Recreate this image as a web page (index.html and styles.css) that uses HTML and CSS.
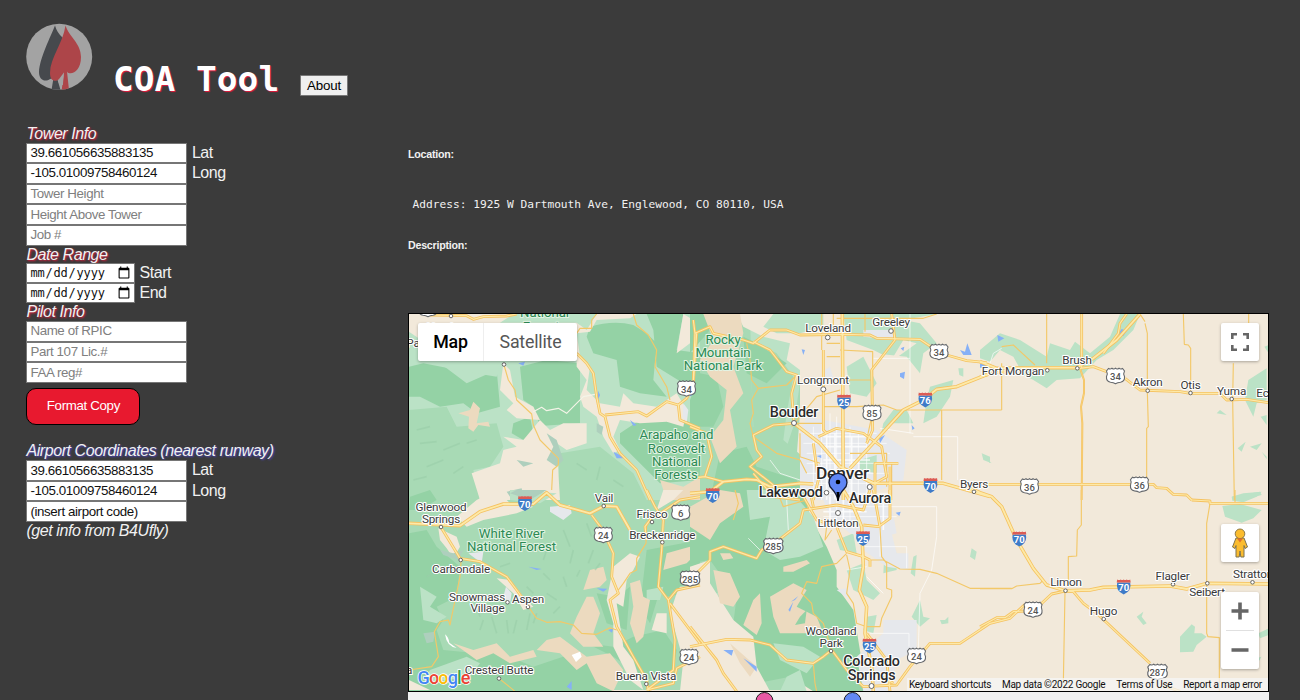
FILE: index.html
```html
<!DOCTYPE html>
<html lang="en">
<head>
<meta charset="utf-8">
<title>COA Tool</title>
<link rel="stylesheet" href="styles.css">
</head>
<body>
<header class="header">
  <svg class="logo" viewBox="20 18 80 80" width="80" height="80">
    <defs><clipPath id="disc"><circle cx="59.2" cy="56.7" r="33"/></clipPath></defs>
    <circle cx="59.2" cy="56.7" r="33" fill="#a3a3a3"/>
    <g clip-path="url(#disc)">
      <path fill="#46494d" d="M55 25.500C51 36 39.500 58 39 72c0 8 6 10.500 11 7l3.500-1L51.500 90h9L57 78l6-40Q57 33 55 25.500z"/>
      <path fill="#ad4549" d="M65.500 25.500C69 37 81 43 81 57c0 12-6.500 17-11.500 16.200Q67.500 73 67 71.500L69 90h-7.300L64 72.500C60 83 50 84 50 73 50 58 63 43 65.500 25.500z"/>
      <path fill="#a3a3a3" d="M63.900 72.500l-1 12.500h-3.200L58 80.500z"/>
    </g>
  </svg>
  <h1 class="title">COA Tool</h1>
  <button class="about">About</button>
</header>
<main class="main">
  <form class="form">
    <div class="heading">Tower Info</div>
    <label class="row"><input class="field" value="39.661056635883135">Lat</label>
    <label class="row"><input class="field" value="-105.01009758460124">Long</label>
    <div class="row"><input class="field" placeholder="Tower Height"></div>
    <div class="row"><input class="field" placeholder="Height Above Tower"></div>
    <div class="row"><input class="field" placeholder="Job #"></div>
    <div class="heading">Date Range</div>
    <label class="row row-date"><input class="field date" type="date">Start</label>
    <label class="row row-date"><input class="field date" type="date">End</label>
    <div class="heading">Pilot Info</div>
    <div class="row"><input class="field" placeholder="Name of RPIC"></div>
    <div class="row"><input class="field" placeholder="Part 107 Lic.#"></div>
    <div class="row"><input class="field" placeholder="FAA reg#"></div>
    <button class="format" type="button">Format Copy</button>
    <div class="heading airport">Airport Coordinates (nearest runway)</div>
    <label class="row"><input class="field" value="39.661056635883135">Lat</label>
    <label class="row"><input class="field" value="-105.01009758460124">Long</label>
    <div class="row"><input class="field" value="(insert airport code)"></div>
    <div class="note">(get info from B4Ufly)</div>
  </form>
  <section class="results">
    <h5 class="label">Location:</h5>
    <pre class="address">Address: 1925 W Dartmouth Ave, Englewood, CO 80110, USA</pre>
    <h5 class="label">Description:</h5>
    <div class="map">
      <svg class="canvas" viewBox="409 314 859 377" width="859" height="377">
        <defs>
          <g id="us"><path d="M-7-7.500q2 1 3.500-.3Q-1.500-6.300 0-7.800 1.500-6.300 3.500-7.800 5-6.500 7-7.500L9-5Q7.500-2.500 9 .5 9.500 5.500 5 6.200 2 6.500 0 7.700-2 6.500-5 6.200-9.500 5.500-9 .5-7.500-2.500-9-5z" fill="#fff" stroke="#66696d" stroke-width="1.100"/></g>
          <g id="is"><path d="M-6.500-4H6.500Q8.500 4 0 8-8.500 4-6.500-4z" fill="#3f7bc8"/><path d="M-6.500-7Q-4.500-5.800-3-7-1.500-5.800 0-7 1.500-5.800 3-7 4.500-5.800 6.500-7L7-4H-7z" fill="#dc5b54"/></g>
          <g id="pin"><path d="M0 16Q-1 9-6 4A9 9 0 1 1 6 4Q1 9 0 16z" fill="#5f86f5" stroke="#151b35" stroke-width="1.300"/><path d="M-1.500 7H1.500L.5 16h-1z"/><circle cy="-3" r="2.300"/></g>
          <g id="roads">
            <g transform="translate(400 300) scale(.33333)"><path d="M90 45L200 47 220 58 250 50 320 48 350 42M530 160L560 190 580 220 590 290 600 340 615 350 630 410 660 460 710 510 750 600M615 345L715 335 740 348 800 305 835 315 860 295 880 250 890 100M835 315L840 360 900 385"/></g>
            <g transform="translate(400 490) scale(.33333)"><path class="wide" d="M27 100L180 107 240 65 310 42 400 42 440 8 480 45 570 70 612 48 650 50 690 120"/><path d="M575 75L605 115 640 190 635 260 655 310 630 330 650 410 700 500 740 570 745 604M122 110L180 205 240 215 320 260 350 300 383 345M740 0L765 50 790 90 785 180 775 290 805 330 825 450 820 540 740 600M810 340L870 420 900 460M805 330L830 300 900 285M765 80L840 30 900 20M765 70L735 110 740 150M740 600L820 580 830 535 900 500"/></g>
            <g transform="translate(690 300) scale(.33333)"><path class="wide" d="M457 42L460 600M900 220L800 260 740 268 700 300 640 330 540 440 480 505M312 370L390 430 450 500M0 580L60 575 100 545 170 538 200 540 240 560 330 550 370 552M450 500L550 550H760L900 590"/><path d="M10 60L15 100 10 240M15 100L60 80 70 100 160 120 190 130 240 90 290 90 330 105 460 103 540 105 560 115 690 118 730 145M770 165L830 182 890 188M190 125L240 150 290 215 320 225 305 280 312 370 250 375 190 405 200 450 215 470 180 500 250 555M400 150V390L410 400M605 42L615 120 545 210 548 390 530 430M385 410L440 385 520 400 575 440 590 530 555 550 490 520 440 510M625 490H555V600M600 500V600M370 600L385 540 370 430M0 380L50 400 65 470 45 530 0 535M45 530L100 545M190 520L250 590 330 600"/></g>
            <g transform="translate(690 490) scale(.33333)"><path class="wide" d="M460 0L490 50 515 110 520 230 508 300 530 350 525 430 545 530 550 604"/><path d="M0 270L60 210 60 185 100 170 200 205 215 180 260 155 330 100 340 60 440 45 520 60 540 0M340 20L380 90 440 110 470 185 520 200 540 210M360 0L370 50M0 410L40 460 80 510 100 550 140 604M0 470L110 448 180 450 240 465 290 510 370 520 400 500 425 480 470 540 520 590 620 585 660 530 720 460 810 460 900 400 960 385 1005 343M600 0V85L565 110 520 105M550 0L570 110M540 210V230M530 430L590 510 600 604M540 540L610 580"/></g>
            <g transform="translate(980 300) scale(.33333)"><path class="wide" d="M0 185L50 205 165 203H290L340 175 410 120 480 42"/><path d="M0 230L60 215 110 220M300 205L340 200 380 215M435 235L480 270 600 275 630 280 720 280 740 300 800 298 865 308M370 160L415 100 420 70 440 42M305 42V205M0 553H520L530 563 560 565 580 583 620 585 635 600"/><path class="thin" d="M300 205L312 240V280L303 320 307 370 305 600"/></g>
            <g transform="translate(980 490) scale(.33333)"><path class="wide" d="M-40 -10L0 8 35 20 65 50 110 150 160 235 200 285 255 302 330 300 370 292 570 288 620 297 680 280 866 282"/><path d="M635 30L690 33 690 40H866M135 363L100 365 75 383 50 383 0 410M180 345L215 312 255 303 280 305 310 340 350 370 510 520M560 590L600 604"/></g>
          </g>
        </defs>
        <rect x="408" y="313" width="861" height="379" fill="#f2e9da"/>
        <!-- forests and open land, north west -->
        <g transform="translate(400 300) scale(.33333)">
          <path class="g2" d="M0 0H1330L1300 200 1200 340 1180 600 1170 1170H0z"/>
          <path class="g1" d="M0 42H900V600H0z"/>
          <path class="g3" d="M27 180L120 190 200 250 290 210 300 320 230 340 190 310 120 320 60 290 27 290zM360 200L440 180 540 190V370L420 378 400 320 370 300zM570 80Q640 60 700 75L740 100 770 130 760 240 800 290 720 280 660 260 650 180 580 160 560 110zM740 42H850L830 150 900 160V260L850 250 770 200 760 90zM660 430L660 400 720 360 830 350 900 380V540L780 550 680 450zM340 370L390 350 400 400 370 420 335 400zM365 520L410 500 420 540 380 560z"/>
          <path class="g2" d="M27 330L140 320 170 380 290 370 310 440 270 500 220 510 240 600H27zM480 460L600 440 700 520 740 600H470z"/>
          <path class="b" d="M27 42H340L300 68H530L560 90 590 42H710L690 55 590 60 570 95 530 100 540 170 570 200 560 270 600 310 660 320 670 280 700 310 770 320 830 280 860 330 850 380 800 365 720 370 660 360 640 410 660 450 640 460 610 410 590 350 550 320 540 290 560 240 530 200 530 150 60 180H27zM310 190L330 210 345 290 400 320 420 360 350 355 320 330 340 310 300 270zM310 410L370 420 420 360 450 390 490 370 560 370V430L500 450 470 430 480 600H240L215 520 300 490 310 450 350 440zM850 42L880 60 870 130 830 160 840 100z"/>
          <path class="g1" d="M27 95L160 185 300 195 290 230 200 215 70 190 27 200z"/>
          <path class="t" d="M175 340L210 330 220 305 240 325 230 370 265 365 270 380 235 375 220 395 205 385 207 350zM780 540L850 560 900 530V600H800z"/>
          <path class="r" d="M440 400L470 420 490 480 470 500 440 480 460 440zM350 480L400 490 370 500zM590 370L610 380 605 405 590 395zM320 575L365 565 370 590 330 590z"/>
          <path class="w" d="M355 190L375 185 370 197zM595 272L600 285 592 305zM690 360L710 375 700 378zM640 455L680 475 650 475zM870 278L900 280V288H870z"/>
          <path class="u" d="M850 310L865 330 860 370 848 350z"/>
          <path class="shade" d="M50 390L90 380M60 430L110 425M130 450L180 430M200 430L230 420M80 500L130 480M40 540L80 530M160 520L190 500M530 490L560 510M600 500L590 540M640 540L670 560"/>
        </g>
        <!-- White River and Sawatch -->
        <g transform="translate(400 490) scale(.33333)">
          <path class="g3" d="M27 130L80 120 110 170 180 230 170 320 110 350 130 390 110 420 130 480 230 490 290 480 330 500 400 530 520 490 600 540 640 604H27zM560 460L640 470 700 440 790 420 830 480 820 540 740 570 700 540 640 500zM590 310L650 320 690 290 680 420 620 400zM740 180L900 150V300L800 320 780 300 750 400 720 350zM30 20L90 0 110 30 60 60 27 60z"/>
          <path class="g1" d="M60 290L110 320 90 350 140 380 110 400 70 390zM330 0L470 10 420 40 330 30zM90 540L200 500 240 520 210 560 70 580zM740 300L790 290 780 330 740 330z"/>
          <path class="b" d="M170 80L230 30 290 0 330 40 400 50 350 70 250 90 200 110zM115 115L170 140 180 170 160 205 140 175 120 150zM290 265L330 270 370 320 400 350 370 360 340 310zM640 230L690 190 720 200 700 240 680 270 670 350 650 340 670 470 700 510 730 600 690 570 640 470 640 400 620 330zM840 290L900 285V604H840L850 510 810 370 830 310zM27 570L90 600H27zM790 0L850 0 820 30 770 60zM770 370L800 370 800 430 755 420z"/>
          <path class="t" d="M550 300L570 240 610 230 620 270 600 290zM560 320L580 320 600 370 580 430 610 470 550 470 510 430 530 380zM690 280L720 270 730 320 750 330 730 440 710 460 690 400 700 350zM160 460L220 480 290 460 330 500 400 480 410 500 330 520 280 490 230 510zM410 480L440 450 480 440 560 500 630 490 670 540 640 604 590 580 560 520 530 540 480 490zM800 190L870 170 900 140V180L860 220 790 240z"/>
          <path class="r" d="M120 180L160 190 190 180 175 210 130 195zM330 10L350 0 440 0 390 30zM70 430L105 425 100 455 80 460z"/>
          <path class="u" d="M450 50L510 45 515 70 490 90 450 65zM205 190L250 185 245 220zM318 290L335 310 330 340 310 320z"/>
          <path class="w" d="M385 230L425 237 410 240zM590 295L622 296 610 305zM500 590L515 573 515 600zM625 420L640 415 636 428z"/>
          <path fill="#fff" d="M135 433Q145 440 148 458L170 474Q140 470 135 433zM515 495L540 485 545 500 528 516z"/>
          <path class="shade" d="M560 100L575 140M490 120L510 170M430 250L450 270M250 390L240 420M290 430L275 380M320 390L325 430M350 390L340 430M390 370L380 420M410 370L400 400M440 310L470 330M500 290L490 260M580 180L565 220M230 350L240 380M520 180L510 220M600 220L585 240M440 180L430 210M380 290L400 310M460 370L480 350M540 240L530 260M300 230L330 220M80 260L100 250"/>
        </g>
        <!-- Front Range -->
        <g transform="translate(690 300) scale(.33333)">
          <path class="g1" d="M180 42H620L740 42 640 60 690 70 740 130 700 160 690 220 650 170 550 160 550 210 480 230 530 270 510 320 440 280 400 300 330 250 310 380 290 440 190 440z"/>
          <path class="b" d="M140 42H250L220 80 260 100 330 100 400 80 400 42H460L470 120 550 150 610 180 680 130 640 120 610 170 600 220 550 220 600 290 560 340 400 360 330 330 330 210 290 180 300 130 220 110 160 80z"/>
          <path class="g2" d="M180 120L260 160 310 230 290 340 280 420 350 480 330 600H60L80 420 190 380z"/>
          <path class="g3" d="M0 42H70L60 90 0 160zM30 220L80 230 100 320 70 380 0 380V300zM160 110L200 130 290 190 230 250 170 220zM90 460L170 440 200 500 320 540 350 600H60z"/>
          <path class="t" d="M40 42H150L160 100 130 200 160 280 120 330 140 440 90 490 60 410 100 360 110 270 60 230 30 180 70 120z"/>
          <path class="g1" d="M720 260L790 240 780 290 740 350 700 370 710 300zM610 330L650 330 670 370 600 370 570 420 580 370zM805 205L820 205 820 230 808 225zM875 460L900 470V490zM470 200L520 170 560 250 530 290 480 280z"/>
          <path class="u" d="M350 350L560 390 650 450 640 540 600 560 470 600 330 600 330 400zM520 90L610 90 620 120 520 110zM405 210L420 200 430 235 405 240z"/>
          <path class="g1" d="M510 480L560 465V520L510 510z"/>
          <path class="w" d="M810 150L825 155 832 130 845 165 820 165zM630 220L645 215 642 237 630 230zM335 148L345 150 340 165zM567 415L585 405 570 430zM380 468L395 465 395 475zM665 375L674 385 667 390zM632 145L643 140 640 153z"/>
          <path class="street" d="M340 400H560M340 430H590M350 460H600M350 490H600M350 520H600M350 550H600M350 580H600M370 380V600M395 370V600M420 340V600M440 350V600M480 380V600M505 400V600M530 430V600M550 175H660M670 410H803V540M570 385L670 400M660 42V400M240 480L270 520 330 540"/>
          <path class="street thick" d="M400 410H530M395 440H530M400 480H540M410 400V600M435 400V600M485 410V600"/>
        </g>
        <!-- Pike forest and Colorado Springs -->
        <g transform="translate(690 490) scale(.33333)">
          <path class="g3" d="M0 80L70 0H340L360 80 410 170 440 240 440 290 490 360 530 604H370L300 560 200 580 180 440 130 400 140 320 60 210 0 220z"/>
          <path class="g1" d="M170 0H300L370 80 400 170 330 200 270 210 220 180 240 80 180 90zM440 150L490 130 500 190 450 180zM250 460L340 470 390 500 350 550 270 510zM470 240L520 220 530 270 570 310 550 330 490 300zM585 160L620 190 620 240 580 250zM670 200L680 195 675 260 662 250zM845 175L860 185 855 210 840 200zM690 330L700 380 720 385 690 410 665 380zM750 390L765 390 775 380 775 400 755 403zM530 380L560 375 550 430 520 420zM60 310L85 310 80 330 65 330zM290 560L330 540 350 604H270z"/>
          <path class="b" d="M0 230L60 210 60 280 130 390 190 440 200 530 240 604H0z"/>
          <path class="t" d="M0 50L90 0 150 10 160 50 90 100 60 150 0 110zM90 190L120 190 130 205 100 210zM70 240L120 250 150 320 130 350 90 340zM280 230L350 210 360 220 310 245 280 245zM240 320L310 280 350 300 320 350 380 380 400 430 270 430 250 380zM190 330L210 310 215 400 200 435 160 405zM120 460L200 530 180 560 150 520z"/>
          <path class="g3" d="M330 380L350 360 345 400 315 405z"/>
          <path class="u" d="M400 30L600 20 620 130 550 150 480 130 420 80zM580 390H680V480L620 510 600 604H520L500 500 580 430zM540 130L600 110 620 190 655 190 655 240 590 230 520 180zM440 300L470 295 480 330z"/>
          <path class="w" d="M295 360L310 335 300 365zM303 335L325 318 315 330zM160 505L200 530 200 545zM100 480L130 480 125 497zM617 68L632 65 628 78z"/>
          <path class="street" d="M390 50H600M400 80H620M440 20V90M480 20V100M570 120V200M600 50H740M520 170H650V235M740 50V140L725 240 690 310 685 480M540 430H657V470M290 30L295 120M175 145L210 180M470 240L530 230M530 260L580 310"/>
          <path class="street thick" d="M400 65H530M420 20V90M460 20V90M580 40V120"/>
        </g>
        <!-- eastern plains -->
        <g transform="translate(980 300) scale(.33333)">
          <path class="g1" d="M0 150L60 100 120 120 200 170 210 130 270 150 285 125 330 160 390 110 420 42H480L460 90 400 150 350 180 300 235 230 240 200 265 160 240 130 225 100 170 60 150 30 185 0 175zM5 460L35 490 10 480zM720 330L740 345 710 340zM805 240L860 205V300L830 310 820 350 795 300zM842 350L860 345V375zM773 445L797 425 785 455zM810 440L845 430 830 450zM845 455L860 470V478zM755 590L840 575 845 585 790 600zM853 140L866 135V160z"/>
          <path class="w" d="M52 105L73 115 55 125zM412 105L425 87 440 93 430 108zM0 192L18 190V203H0z"/>
          <path class="street" d="M30 190L40 160 65 145"/>
        </g>
        <g transform="translate(980 490) scale(.33333)">
          <path class="g1" d="M727 48L780 42 845 60 820 85 785 98 735 80zM755 20L790 10 845 5 830 20 790 37 757 32zM470 380L490 365 485 380 500 400 490 405zM600 440L635 403 645 410 643 430 665 430 680 440 650 465 640 485 600 487zM835 430L866 415V435L840 445zM834 503L844 500 838 512z"/>
        </g>

        <!-- secondary roads -->
        <g class="minor">
          <g transform="translate(400 300) scale(.33333)">
            <path d="M312 195L325 240 345 270 350 300 395 342 400 375 420 420 475 475 475 495 458 510 455 570M700 42L710 75 745 105 770 150 765 200 800 260 810 300M530 100L540 85 575 85 575 60 590 42"/>
            <path class="white" d="M400 335L425 322 440 332 475 325 500 340 520 320 550 290 585 283"/>
          </g>
          <g transform="translate(400 490) scale(.33333)"><path d="M183 215L180 260 155 380 150 405 145 390 120 395 103 425 115 500 95 530 27 540M385 350L410 385 440 397 480 395 520 405 545 430 590 433 630 413 650 420M740 100L738 160 710 205 710 240 690 250 670 280 655 300M297 565L345 604"/></g>
          <g transform="translate(690 300) scale(.33333)"><path d="M170 130L180 180 185 240 205 265 185 300 190 340 180 370 190 410M205 265L290 255 320 225M395 42V150M430 42V100M410 130H450M410 170H450M450 150L548 155V320M470 240H545M400 320H500L580 315 620 330H935M755 330V540M440 55H700L740 42M525 42V95M315 370H400M305 380L330 350 380 290 450 270M545 350L530 420M190 410L260 460 330 480 350 520M330 400V470L390 490M480 460H590V560M605 490V600"/></g>
          <g transform="translate(690 490) scale(.33333)"><path d="M470 190L440 220 395 230 380 280 350 275 335 310 365 340 370 370 400 400 425 480M470 195L480 240 470 310 490 340 500 400 530 410 570 410 575 385 605 320 605 300 590 295 590 220 575 200 570 110M535 210L580 210 630 237 690 238 740 250 840 295H965M370 520L375 580 380 604M260 0L280 50 350 30M130 90L145 40 135 0M425 120L405 150 410 110 430 90"/></g>
          <g transform="translate(980 300) scale(.33333)"><path d="M65 140L100 135 165 195M65 190V330M200 42V190M610 42L613 133 625 135 632 145V280M760 190L758 300 763 600M806 42V70M495 70L502 100V275L505 380 500 385V540M480 42L495 65"/></g>
          <g transform="translate(980 490) scale(.33333)"><path d="M304 0V105L292 120 290 198 265 200V280M255 305L250 580M765 0V40M690 40L680 100V430L684 440 718 443V604M0 296H95L110 288 180 280 190 270M718 560V600"/></g>
        </g>

        <!-- main highways, stroked twice for casing and fill -->
        <use href="#roads" class="casing"/>
        <use href="#roads" class="inner"/>

        <!-- towns -->
        <g class="towns">
          <circle cx="827.700" cy="337.500" r="2.300"/><circle cx="891" cy="331" r="2.300"/><circle cx="823.300" cy="389.300" r="2.500"/><circle cx="794" cy="423" r="2.500"/><circle cx="826.500" cy="492.700" r="2.300"/><circle cx="869.700" cy="487" r="2.500"/><circle cx="838" cy="513" r="2.500"/><circle cx="831" cy="651" r="1.800"/><circle cx="871.500" cy="686" r="2.500"/><circle cx="1047.300" cy="370.300" r="1.800"/><circle cx="1077.300" cy="368.300" r="1.800"/><circle cx="1147.700" cy="390.700" r="1.800"/><circle cx="1190.500" cy="393" r="1.800"/><circle cx="1231.700" cy="399" r="1.800"/><circle cx="974" cy="491.800" r="1.800"/><circle cx="1065.500" cy="590.700" r="1.800"/><circle cx="1103.700" cy="619" r="1.800"/><circle cx="1173" cy="584.300" r="1.800"/><circle cx="1207.300" cy="583.300" r="1.800"/><circle cx="1252.500" cy="582.300" r="1.800"/><circle cx="603.700" cy="506" r="1.800"/><circle cx="652" cy="522" r="1.800"/><circle cx="662.300" cy="542.300" r="1.800"/><circle cx="441" cy="527" r="1.800"/><circle cx="460.700" cy="560" r="1.800"/><circle cx="507.500" cy="602.300" r="1.800"/><circle cx="528" cy="607" r="1.800"/><circle cx="499" cy="678.500" r="1.800"/><circle cx="646.300" cy="684" r="1.800"/><circle cx="504" cy="364.500" r="1.800"/><circle cx="451" cy="316" r="1.800"/>
        </g>
        <g class="shields">
          <g transform="translate(428 309)"><use href="#us"/></g>
          <g transform="translate(686.500 388.500)"><use href="#us"/><text y="4">34</text></g>
          <g transform="translate(939 352)"><use href="#us"/><text y="4">34</text></g>
          <g transform="translate(872 413)"><use href="#us"/><text y="4">85</text></g>
          <g transform="translate(1115.500 376)"><use href="#us"/><text y="4">34</text></g>
          <g transform="translate(1029.500 486.500)"><use href="#us"/><text y="4">36</text></g>
          <g transform="translate(1139.500 484.700)"><use href="#us"/><text y="4">36</text></g>
          <g transform="translate(603.300 535)"><use href="#us"/><text y="4">24</text></g>
          <g transform="translate(680.700 512.700)"><use href="#us"/><text y="4">6</text></g>
          <g transform="translate(690 578.700)"><use href="#us" transform="scale(1.080 1)"/><text y="4">285</text></g>
          <g transform="translate(689 657)"><use href="#us"/><text y="4">24</text></g>
          <g transform="translate(773.300 546)"><use href="#us" transform="scale(1.080 1)"/><text y="4">285</text></g>
          <g transform="translate(916.500 656)"><use href="#us"/><text y="4">24</text></g>
          <g transform="translate(1033 609.700)"><use href="#us"/><text y="4">24</text></g>
          <g transform="translate(1157.500 672)"><use href="#us" transform="scale(1.080 1)"/><text y="4">287</text></g>
        </g>
        <g class="shields inter">
          <g transform="translate(525 503)"><use href="#is"/><text y="4.500">70</text></g>
          <g transform="translate(844 401.500)"><use href="#is"/><text y="4.500">25</text></g>
          <g transform="translate(925.300 399.500)"><use href="#is"/><text y="4.500">76</text></g>
          <g transform="translate(930.500 485)"><use href="#is"/><text y="4.500">70</text></g>
          <g transform="translate(712.700 495)"><use href="#is"/><text y="4.500">70</text></g>
          <g transform="translate(863 538)"><use href="#is"/><text y="4.500">25</text></g>
          <g transform="translate(869.500 645.500)"><use href="#is"/><text y="4.500">25</text></g>
          <g transform="translate(1019.300 538.500)"><use href="#is"/><text y="4.500">70</text></g>
          <g transform="translate(1123.700 586.500)"><use href="#is"/><text y="4.500">70</text></g>
        </g>
        <g class="forest">
          <text x="544.500" y="317">National</text><text x="544.500" y="331">Forests</text>
          <text x="723" y="344">Rocky</text><text x="723" y="357">Mountain</text><text x="723" y="370">National Park</text>
          <text x="676.500" y="439">Arapaho and</text><text x="676.500" y="452.500">Roosevelt</text><text x="676.500" y="465.700">National</text><text x="676" y="479">Forests</text>
          <text x="511.500" y="538">White River</text><text x="511.500" y="551">National Forest</text>
        </g>
        <g class="place">
          <text x="446" y="331">Hayden</text><text x="413" y="347">Pa</text><text x="409" y="674">a</text>
          <text x="828" y="332">Loveland</text><text x="891" y="326">Greeley</text><text x="823" y="384">Longmont</text>
          <text x="838" y="526.500">Littleton</text><text x="441" y="511">Glenwood</text><text x="441" y="523">Springs</text>
          <text x="461" y="573">Carbondale</text><text x="477" y="601">Snowmass</text><text x="487.500" y="612">Village</text><text x="528" y="602.500">Aspen</text>
          <text x="499" y="674">Crested Butte</text><text x="646" y="680">Buena Vista</text><text x="604" y="502">Vail</text><text x="652" y="517.500">Frisco</text><text x="662.300" y="538.500">Breckenridge</text>
          <text x="831" y="635">Woodland</text><text x="831" y="646.500">Park</text>
          <text x="1013" y="374.500">Fort Morgan</text><text x="1077" y="364">Brush</text><text x="1147.700" y="386">Akron</text><text x="1190.500" y="388.500">Otis</text><text x="1231.500" y="395">Yuma</text><text x="1262.500" y="396.500">Ec</text>
          <text x="974" y="487.500">Byers</text><text x="1066" y="586">Limon</text><text x="1103.500" y="615">Hugo</text><text x="1172.500" y="580">Flagler</text><text x="1207" y="596">Seibert</text><text x="1253" y="578">Stratton</text>
        </g>
        <g class="place city">
          <text x="794" y="417">Boulder</text><text x="790.700" y="497">Lakewood</text><text x="870" y="502.500">Aurora</text><text x="871.500" y="666">Colorado</text><text x="871.500" y="680">Springs</text>
          <text class="capital" x="842.500" y="478.500">Denver</text>
        </g>
        <use href="#pin" x="838" y="485"/>
        <text class="google" x="417.500" y="684" textLength="53"><tspan fill="#4285f4">G</tspan><tspan fill="#ea4335">o</tspan><tspan fill="#fbbc05">o</tspan><tspan fill="#4285f4">g</tspan><tspan fill="#34a853">l</tspan><tspan fill="#ea4335">e</tspan></text>
      </svg>
      <div class="types"><span class="type active">Map</span><span class="type">Satellite</span></div>
      <div class="control full"><svg width="18" height="18" fill="none" stroke="#666" stroke-width="2.600"><path d="M1.300 6V1.300H6M12 1.300h4.700V6M16.700 12v4.700H12M6 16.700H1.300V12"/></svg></div>
      <div class="control person"><svg width="18" height="30" viewBox="0 0 18 30"><path d="M5 10h8l3.500 9-2.500 1.500-1-3V29H9.800L9 23l-.8 6H5V17.500l-1 3L1.500 19z" fill="#fbbc2e" stroke="#7d7350" stroke-width="1"/><circle cx="9" cy="5.800" r="4.800" fill="#fbbc2e" stroke="#8b7846" stroke-width="1"/><path d="M6 10.500h6l-3 4z" fill="#df6f2b"/></svg></div>
      <div class="zoom"><svg width="38" height="77"><path d="M5 38.500h28" stroke="#e0e0e0"/><path d="M10.500 19h17M19 10.500v17M10.500 58h17" stroke="#666" stroke-width="3.600"/></svg></div>
      <div class="legal"><span>Keyboard shortcuts</span><span>Map data ©2022 Google</span><span>Terms of Use</span><span>Report a map error</span></div>
    </div>
    <div class="key"><svg width="861" height="8"><g stroke="#222"><circle cx="356.500" cy="9" r="8.500" fill="#e958a4"/><circle cx="444.500" cy="9" r="8.500" fill="#6288f3"/></g></svg></div>
  </section>
</main>
</body>
</html>
```
FILE: styles.css
```css
* { box-sizing: border-box; }
body {
  margin: 0;
  height: 700px;
  overflow: hidden;
  background: #3b3b3b;
  color: #f1f1f1;
  font: 16px/18px "Liberation Sans", Arial, sans-serif;
}
.header { display: flex; height: 124.800px; padding: 18px 0 0 20px; }
.logo { display: block; flex: none; }
.title {
  margin: 40px 0 0 13px;
  width: 187px;
  font: bold 34.500px/42px "DejaVu Sans Mono", monospace;
  color: #fff;
  text-shadow: 1px 1px 1px #e8193c;
  white-space: pre;
}
.about {
  margin-top: 57px;
  width: 48px;
  height: 21px;
  padding: 0;
  border: 1px solid #777;
  border-radius: 1px;
  background: #efefef;
  color: #000;
  font: 13.333px "Liberation Sans", Arial, sans-serif;
  letter-spacing: -.2px;
}
.main { display: flex; align-items: flex-start; padding-left: 26.400px; }
.form { width: 381.600px; flex: none; letter-spacing: -.42px; }
.heading { height: 17.800px; font-style: italic; text-shadow: 1px 1px 2px #e8193c; }
.airport { margin-top: 17px; text-shadow: 1px 1px 2px #4b45c8; }
.row { display: flex; height: 20.600px; gap: 4.500px; line-height: 19px; }
.row-date { height: 20px; }
.field {
  width: 161px;
  height: 100%;
  padding: 0 3px 1px;
  border: 1px solid #767676;
  background: #fff;
  color: #111;
  font: 13.333px "Liberation Sans", Arial, sans-serif;
  letter-spacing: -.39px;
}
.field::placeholder { color: #808080; }
.date { width: 108.500px; font: 12px "DejaVu Sans Mono", monospace; letter-spacing: -.2px; padding: 0 2px; }
.date::-webkit-datetime-edit { padding: 0; }
.date::-webkit-datetime-edit-fields-wrapper { padding: 0; }
.date::-webkit-calendar-picker-indicator { width: 14px; height: 14px; padding: 0 1px 0 0; }
.format {
  display: block;
  width: 114px;
  height: 37.500px;
  margin-top: 5px;
  padding: 0 0 2px;
  border: 1.500px solid #000;
  border-radius: 10px;
  background: #e8192f;
  color: #fff;
  font: 13.333px "Liberation Sans", Arial, sans-serif;
  letter-spacing: -.35px;
}
.note { font-style: italic; }
.results { width: 861px; flex: none; padding-top: 22.200px; }
.label { margin: 0; font: bold 10.700px/14px "Liberation Sans", Arial, sans-serif; letter-spacing: -.25px; }
.address { margin: 37px 0 26px 4.500px; font: 11.210px/14px "DejaVu Sans Mono", monospace; }
.map { position: relative; height: 379px; margin-top: 61px; border: 1px solid #000; background: #f2e9da; overflow: hidden; }
.canvas { display: block; font-family: Roboto, sans-serif; }
.b { fill: #f2e9da; }
.g1 { fill: #bbe2c6; }
.g2 { fill: #a8dab5; }
.g3 { fill: #94d2a5; }
.t { fill: #ecdabf; }
.r { fill: #aecfbd; }
.u { fill: #e6e8ec; }
.w { fill: #86b0f6; }
.shade { fill: none; stroke: #99cda8; stroke-width: 5; opacity: .6; }
.street { fill: none; stroke: #fff; stroke-width: 2.500; opacity: .8; }
.thick { stroke-width: 5; }
.minor { fill: none; stroke: #f3c868; stroke-width: 3.400; stroke-linejoin: round; }
.minor .white { stroke: #f4f4e8; }
/* highways: orange casing with a pale centre */
.casing { --inset: 0px; stroke: #f5c260; }
.inner { --inset: 5px; stroke: #fde9a8; }
#roads path { fill: none; stroke-width: calc(8.500px - var(--inset)); stroke-linejoin: round; }
#roads .wide { stroke-width: calc(10.500px - var(--inset)); }
#roads .thin { stroke-width: calc(6px - var(--inset)); }
.towns { fill: #fff; stroke: #666; stroke-width: 1; }
.shields text { text-anchor: middle; font-size: 9.500px; font-weight: 500; fill: #555; }
.shields.inter text { fill: #fff; font-weight: 700; }
.forest text { text-anchor: middle; font-size: 13.200px; fill: #2c8a54; stroke: #e2f3e3; stroke-width: 2px; paint-order: stroke; letter-spacing: -.05px; }
.place text { text-anchor: middle; font-size: 11.700px; fill: #3a3a3a; stroke: #fff; stroke-width: 2.200px; paint-order: stroke; stroke-linejoin: round; letter-spacing: -.16px; }
.city text { font-size: 14.300px; font-weight: 500; fill: #2a2a2a; }
.city .capital { font-size: 17.300px; }
.google { font: 500 18px Roboto, sans-serif; stroke: #fff; stroke-width: 1.500px; paint-order: stroke; }
.types { position: absolute; left: 9px; top: 9px; display: flex; width: 159px; height: 38px; background: #fff; border-radius: 2px; box-shadow: 0 1px 3px rgba(0,0,0,.3); }
.type { flex: 1; text-align: center; font: 17.800px/38px Roboto, sans-serif; letter-spacing: -.2px; color: #565656; }
.active { flex: none; width: 66px; color: #000; font-weight: 500; border-right: 1px solid #eee; }
.control, .zoom { position: absolute; right: 9px; width: 38px; background: #fff; border-radius: 2px; box-shadow: 0 1px 3px rgba(0,0,0,.3); }
.control { display: flex; align-items: center; justify-content: center; height: 38px; }
.full { top: 9px; }
.person { top: 210px; }
.zoom { top: 278px; height: 77px; }
.legal { position: absolute; right: 0; bottom: 0; display: flex; justify-content: space-between; width: 361px; height: 13px; padding: 0 6px 0 2px; background: rgba(245,245,245,.75); color: #111; font: 10px/13px Roboto, sans-serif; letter-spacing: -.26px; white-space: nowrap; }
.key { height: 8px; background: #f1f1f1; }
.key svg { display: block; }
```
